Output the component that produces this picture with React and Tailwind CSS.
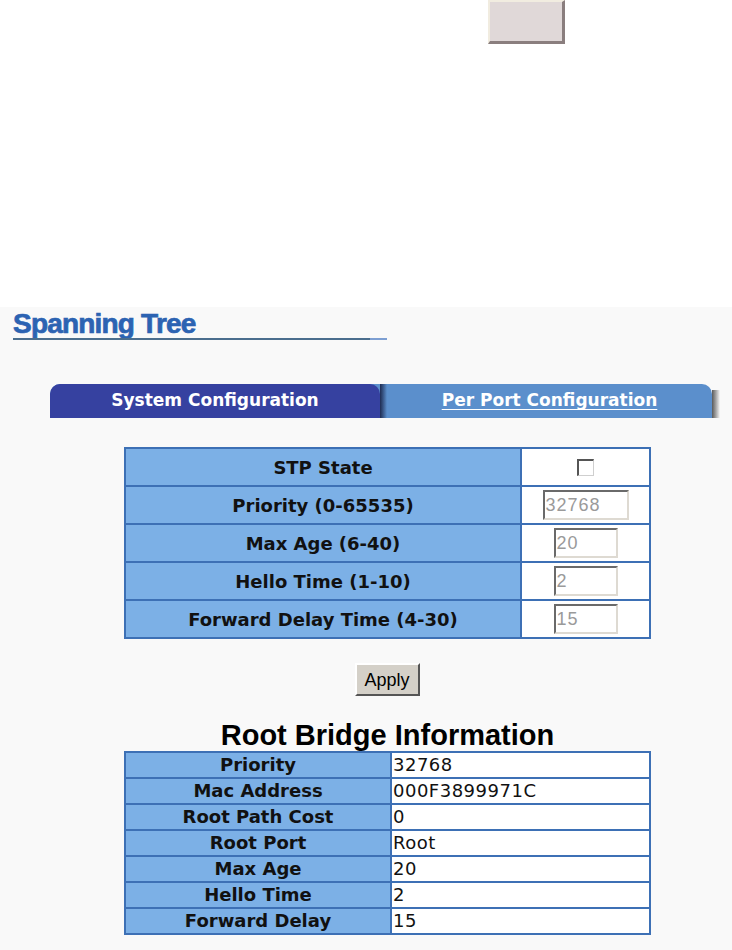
import React from "react";

const stpRows = [
  { label: "STP State", kind: "check" },
  { label: "Priority (0-65535)", kind: "wide", value: "32768" },
  { label: "Max Age (6-40)", kind: "small", value: "20" },
  { label: "Hello Time (1-10)", kind: "small", value: "2" },
  { label: "Forward Delay Time (4-30)", kind: "small", value: "15" },
];

const rootInfo = [
  ["Priority", "32768"],
  ["Mac Address", "000F3899971C"],
  ["Root Path Cost", "0"],
  ["Root Port", "Root"],
  ["Max Age", "20"],
  ["Hello Time", "2"],
  ["Forward Delay", "15"],
];

const pixelFont = { fontFamily: '"DejaVu Sans", Verdana, sans-serif' };

function FieldBox({ kind, value }) {
  if (kind === "check") {
    return (
      <div className="w-[17px] h-[17px] bg-white border-t-2 border-l-2 border-t-[#555] border-l-[#555] border-r border-b border-r-[#cfcfcf] border-b-[#cfcfcf]" />
    );
  }
  return (
    <div
      className={`${kind === "wide" ? "w-[86px]" : "w-[64px]"} h-[30px] bg-white border-t-2 border-l-2 border-t-[#6a6a6a] border-l-[#6a6a6a] border-r-2 border-b-2 border-r-[#dedad2] border-b-[#dedad2] flex items-center pl-[1px] text-[18px] tracking-[1px] text-[#9a9a9a] font-['Liberation_Sans',Arial,sans-serif]`}
    >
      {value}
    </div>
  );
}

function App() {
  return (
    <div className="w-[732px] h-[950px] flex flex-col font-['Liberation_Sans',Arial,sans-serif]">
      {/* top white strip with the cut-off button */}
      <div className="h-[307px] bg-white pl-[488px]">
        <div className="w-[77px] h-[44px] bg-[#e0d8d8] border-t-2 border-l-2 border-t-[#f1ece0] border-l-[#f1ece0] border-r-[3px] border-b-[3px] border-r-[#8a7e7e] border-b-[#8a7e7e]" />
      </div>

      <div className="flex-1 bg-[#f9f9f9] flex flex-col">
        {/* title */}
        <div className="pl-[13px] pt-[3px]">
          <div className="h-[28px] leading-[28px] text-[28px] font-bold tracking-[-0.8px] text-[#2c63b2] [-webkit-text-stroke:0.7px_#2c63b2]">
            Spanning Tree
          </div>
          <div className="flex w-[374px] h-[2px]">
            <div className="flex-1 bg-[#4b6e8e]" />
            <div className="w-[17px] bg-[#7d9fd2]" />
          </div>
        </div>

        {/* tabs */}
        <div className="mt-[44px] ml-[50px] flex h-[34px]">
          <div className="w-[662px] flex bg-[#5b8fcc] rounded-tr-[10px] rounded-tl-[10px]">
            <div
              className="w-[330px] bg-[#3641a0] rounded-t-[10px] flex items-center justify-center text-white font-bold text-[17px]"
              style={pixelFont}
            >
              System Configuration
            </div>
            <div className="w-[7px] bg-gradient-to-r from-[#1e2c52] to-[#5b8fcc]" />
            <div
              className="flex-1 flex items-center justify-center text-white font-bold text-[17px] underline underline-offset-[3px]"
              style={pixelFont}
            >
              Per Port Configuration
            </div>
          </div>
          <div className="w-[8px] mt-[6px] bg-gradient-to-r from-[#5a5a5a] to-[#f9f9f9]" />
        </div>

        {/* STP settings table */}
        <div className="mt-[29px] ml-[124px] w-[527px] border-2 border-[#3d70b5] flex flex-col">
          {stpRows.map((row, i) => (
            <div
              key={row.label}
              className={`flex ${i > 0 ? "h-[38px] border-t-2 border-[#3d70b5]" : "h-[36px]"}`}
            >
              <div
                className="w-[396px] bg-[#7cb0e6] border-r-2 border-[#3d70b5] flex items-center justify-center text-[18px] font-bold text-[#111]"
                style={pixelFont}
              >
                {row.label}
              </div>
              <div className="flex-1 bg-white flex items-center justify-center">
                <FieldBox kind={row.kind} value={row.value} />
              </div>
            </div>
          ))}
        </div>

        {/* apply */}
        <div className="mt-[24px] flex justify-center pl-[42px]">
          <button className="w-[65px] h-[33px] bg-[#d4d0c8] border-t-2 border-l-2 border-t-white border-l-white border-r-2 border-b-2 border-r-[#555] border-b-[#555] text-[18px] text-black leading-none">
            Apply
          </button>
        </div>

        {/* root bridge information */}
        <div className="mt-[27px] ml-[124px] w-[527px] h-[28px] leading-[24px] text-center text-[29px] font-bold text-black">
          Root Bridge Information
        </div>
        <div className="ml-[124px] w-[527px] border-2 border-[#3d70b5] flex flex-col">
          {rootInfo.map(([label, value], i) => (
            <div
              key={label}
              className={`flex ${i > 0 ? "h-[26px] border-t-2 border-[#3d70b5]" : "h-[24px]"}`}
            >
              <div
                className="w-[266px] bg-[#7cb0e6] border-r-2 border-[#3d70b5] flex items-center justify-center text-[18px] font-bold text-[#111] leading-none"
                style={pixelFont}
              >
                {label}
              </div>
              <div
                className="flex-1 bg-white flex items-center pl-[1px] text-[18px] tracking-[0.5px] text-[#111] leading-none"
                style={pixelFont}
              >
                {value}
              </div>
            </div>
          ))}
        </div>
      </div>
    </div>
  );
}

export default App;
